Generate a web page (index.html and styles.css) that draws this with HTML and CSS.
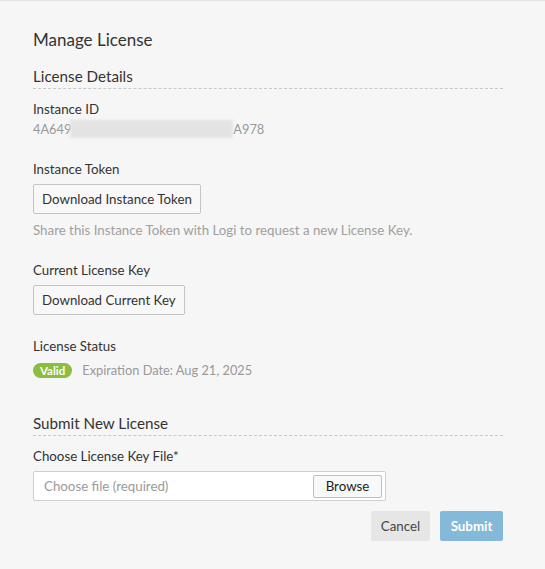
FILE: index.html
```html
<!DOCTYPE html>
<html>
<head>
<meta charset="utf-8">
<link rel="stylesheet" href="styles.css">
</head>
<body>
<div class="page">
  <h1 class="title">Manage License</h1>
  <h2 class="section">License Details</h2>
  <div class="field first">
    <div class="label">Instance ID</div>
    <div class="value">4A649<span class="redact"></span>A978</div>
  </div>
  <div class="field">
    <div class="label">Instance Token</div>
    <button class="btn">Download Instance Token</button>
    <div class="help">Share this Instance Token with Logi to request a new License Key.</div>
  </div>
  <div class="field">
    <div class="label">Current License Key</div>
    <button class="btn">Download Current Key</button>
  </div>
  <div class="field">
    <div class="label">License Status</div>
    <div class="status"><span class="badge">Valid</span><span class="exp">Expiration Date: Aug 21, 2025</span></div>
  </div>
  <h2 class="section second">Submit New License</h2>
  <div class="field first">
    <div class="label">Choose License Key File*</div>
    <div class="file">
      <span class="placeholder">Choose file (required)</span>
      <button class="browse">Browse</button>
    </div>
  </div>
  <div class="actions">
    <button class="cancel">Cancel</button>
    <button class="submit">Submit</button>
  </div>
</div>
</body>
</html>
```
FILE: styles.css
```css
* {
  box-sizing: border-box;
}
html, body {
  margin: 0;
  padding: 0;
  background: #f6f6f6;
}
body {
  border-top: 1px solid #e2e2e2;
  font-family: "Lato", "Liberation Sans", sans-serif;
  color: #333;
  height: 569px;
}
.page {
  width: 503px;
  padding: 29px 0 0 33px;
}
.title {
  margin: 0;
  font-size: 17px;
  font-weight: 400;
  line-height: 20px;
  color: #333;
}
.section {
  margin: 16px 0 0;
  font-size: 15.2px;
  font-weight: 400;
  line-height: 20px;
  padding-bottom: 2px;
  border-bottom: 1px dashed #c8c8c8;
  color: #333;
}
.section.second {
  margin-top: 34px;
}
.field {
  margin-top: 22px;
}
.field.first {
  margin-top: 11px;
}
.label {
  font-size: 13.3px;
  line-height: 18px;
}
.value {
  font-size: 12.8px;
  line-height: 18px;
  margin-top: 2px;
  color: #999;
  display: flex;
  align-items: center;
}
.redact {
  display: inline-block;
  width: 163px;
  height: 18px;
  margin-left: -1px;
  background: #e3e3e3;
  filter: blur(1.5px);
}
.btn {
  margin-top: 6px;
  height: 30px;
  padding: 0 8px;
  font-family: inherit;
  font-size: 13.3px;
  color: #333;
  background: #f8f8f8;
  border: 1px solid #c4c4c4;
  border-radius: 2px;
  display: block;
}
.help {
  margin-top: 7px;
  font-size: 13.3px;
  line-height: 18px;
  color: #a0a0a0;
}
.status {
  margin-top: 6px;
  height: 18px;
  display: flex;
  align-items: center;
  gap: 10px;
}
.badge {
  background: #8bbd3f;
  color: #fff;
  font-size: 11.5px;
  font-weight: 700;
  line-height: 15px;
  padding: 0 7px;
  border-radius: 8px;
}
.exp {
  font-size: 12.8px;
  color: #999;
}
.file {
  margin-top: 6px;
  width: 353px;
  height: 30px;
  background: #fff;
  border: 1px solid #cfcfcf;
  border-radius: 2px;
  display: flex;
  align-items: center;
  justify-content: space-between;
  padding: 0 3px 0 10px;
}
.placeholder {
  font-size: 13.3px;
  color: #9a9a9a;
}
.browse {
  width: 69px;
  height: 23px;
  padding: 0;
  font-family: inherit;
  font-size: 13.3px;
  color: #222;
  background: #f8f9fa;
  border: 1px solid #bdbdbd;
  border-radius: 2px;
}
.actions {
  margin-top: 10px;
  display: flex;
  justify-content: flex-end;
  gap: 10px;
}
.cancel, .submit {
  height: 30px;
  border: none;
  border-radius: 2px;
  font-family: inherit;
  font-size: 13.3px;
}
.cancel {
  width: 59px;
  background: #e6e6e6;
  color: #444;
}
.submit {
  width: 63px;
  background: #85b9da;
  color: #fff;
  font-weight: 700;
}
```
